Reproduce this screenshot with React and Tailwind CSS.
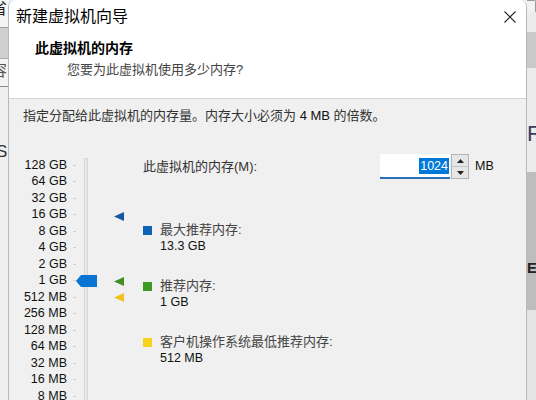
import React from "react";

const scale = ["128 GB","64 GB","32 GB","16 GB","8 GB","4 GB","2 GB","1 GB","512 MB","256 MB","128 MB","64 MB","32 MB","16 MB","8 MB","4 MB"];

function Tri({ color, top }) {
  return (
    <svg className="absolute left-[105px]" style={{ top }} width="10" height="9" viewBox="0 0 10 9">
      <polygon points="0,4.5 10,0 10,9" fill={color} />
    </svg>
  );
}

export default function App() {
  return (
    <div
      className="w-[536px] h-[400px] flex overflow-hidden bg-[#f0f0f0] text-[#1a1a1a]"
      style={{ fontFamily: '"Liberation Sans", "Noto Sans CJK SC", sans-serif' }}
    >
      {/* left background strip */}
      <div className="w-[8px] shrink-0 flex flex-col overflow-hidden bg-[#efefef]">
        <div className="h-[27px] bg-[#f4f4f4] overflow-hidden">
          <div className="ml-[-9px] text-[16px] leading-[18px] text-[#222] whitespace-nowrap">省</div>
        </div>
        <div className="h-px bg-[#9c9c9c]" />
        <div className="h-[30px] bg-[#d0d0d0]" />
        <div className="h-px bg-[#b0b0b0]" />
        <div className="h-[27px] bg-[#f4f4f4] overflow-hidden pt-[3px]">
          <div className="ml-[-9px] text-[16px] leading-[18px] text-[#555] whitespace-nowrap">容</div>
        </div>
        <div className="h-px bg-[#8c8c8c]" />
        <div className="h-[56px]" />
        <div className="overflow-hidden">
          <div className="ml-[-4px] text-[17px] leading-[18px] text-[#333] whitespace-nowrap">S</div>
        </div>
      </div>

      {/* dialog */}
      <div className="w-[519px] shrink-0 flex flex-col border-x border-[#b8b8b8] rounded-t-[7px] overflow-hidden">
        <div className="h-[99px] shrink-0 bg-white border-b border-[#d4d4d4] flex flex-col">
          <div className="h-[34px] flex items-center justify-between pl-[7px] pr-[10px]">
            <span className="text-[16px] leading-none text-black">新建虚拟机向导</span>
            <svg width="12" height="12" viewBox="0 0 12 12">
              <path d="M0.5 0.5 L11.5 11.5 M11.5 0.5 L0.5 11.5" stroke="#222" strokeWidth="1.1" />
            </svg>
          </div>
          <div className="mt-[4px] pl-[26px] text-[14px] leading-[20px] font-bold text-black">此虚拟机的内存</div>
          <div className="mt-[3px] pl-[58px] text-[13px] leading-[18px] text-[#444]">您要为此虚拟机使用多少内存?</div>
        </div>

        <div className="flex-1 flex flex-col bg-[#f0f0f0]">
          <div className="pt-[8px] pl-[14px] text-[13px] leading-[18px] text-[#333]">
            指定分配给此虚拟机的内存量。内存大小必须为 <span className="text-[#111]">4 MB</span> 的倍数。
          </div>

          <div className="mt-[29px] flex">
            {/* slider column */}
            <div className="relative w-[134px] shrink-0 flex">
              <div className="pt-[2.75px] flex flex-col">
                {scale.map((s) => (
                  <div key={s} className="h-[16.5px] flex items-center">
                    <span className="w-[58px] text-right text-[12.5px] leading-none text-[#111]">{s}</span>
                    <span className="ml-[6px] w-[3px] h-px bg-[#cfcfcf]" />
                  </div>
                ))}
              </div>
              <div className="ml-[8px] mt-[4px] w-[4px] border border-[#d6d6d6] bg-[#e9e9e9]" />
              <svg className="absolute left-[67px] top-[121px]" width="21" height="12" viewBox="0 0 21 12">
                <polygon points="0,6 5,0 21,0 21,12 5,12" fill="#0a74d4" />
              </svg>
              <Tri color="#17599e" top={58} />
              <Tri color="#3f8f22" top={123} />
              <Tri color="#f2c21b" top={139} />
            </div>

            {/* right section */}
            <div className="flex flex-col">
              <div className="h-[25px] flex items-center">
                <span className="w-[237px] text-[13px] leading-none text-[#333]">此虚拟机的内存(M):</span>
                <div className="w-[70px] h-[25px] bg-white border-b-2 border-[#2a6fb8] flex items-center justify-end pr-[1px]">
                  <span className="bg-[#0078d7] text-white text-[12.5px] leading-[16px] px-[1px]">1024</span>
                </div>
                <div className="ml-[1px] w-[18px] h-[25px] border border-[#b4b4b4] bg-[#e6e6e6] flex flex-col">
                  <div className="flex-1 flex items-center justify-center border-b border-[#c4c4c4]">
                    <svg width="7" height="4" viewBox="0 0 7 4"><polygon points="3.5,0 7,4 0,4" fill="#222" /></svg>
                  </div>
                  <div className="flex-1 flex items-center justify-center">
                    <svg width="7" height="4" viewBox="0 0 7 4"><polygon points="0,0 7,0 3.5,4" fill="#222" /></svg>
                  </div>
                </div>
                <span className="ml-[6px] text-[12.5px] leading-none text-[#111]">MB</span>
              </div>

              <div className="mt-[43px] flex flex-col gap-[24px]">
                {[
                  ["#0f63b5", "最大推荐内存:", "13.3 GB"],
                  ["#3d9a20", "推荐内存:", "1 GB"],
                  ["#f7d21c", "客户机操作系统最低推荐内存:", "512 MB"],
                ].map(([c, l, v]) => (
                  <div key={l} className="flex gap-[8px]">
                    <span className="mt-[4px] w-[9px] h-[9px]" style={{ backgroundColor: c }} />
                    <div className="flex flex-col">
                      <span className="text-[13px] leading-[16px] text-[#444]">{l}</span>
                      <span className="text-[12.5px] leading-[16px] text-[#111]">{v}</span>
                    </div>
                  </div>
                ))}
              </div>
            </div>
          </div>
        </div>
      </div>

      {/* right background strip */}
      <div className="w-[9px] shrink-0 flex flex-col overflow-hidden bg-[#e8e8e8]">
        <div className="h-[12px] bg-[#f2f2f2] border-t border-r border-[#9a9a9a] rounded-tr-[2px]" />
        <div className="h-[20px] bg-[#ececec]" />
        <div className="h-[36px] bg-[#c9c9c9]" />
        <div className="h-[50px] bg-[#ececec]" />
        <div className="h-[54px] bg-[#ececec] overflow-hidden">
          <div className="mt-[4px] text-[22px] leading-[24px] text-[#3c3c5e] whitespace-nowrap">R</div>
        </div>
        <div className="h-[138px] bg-[#bdbdbd] overflow-hidden pt-[88px]">
          <div className="text-[15px] leading-[16px] font-bold text-[#222] whitespace-nowrap">E</div>
        </div>
        <div className="flex-1 bg-[#e4e4e4]" />
      </div>
    </div>
  );
}
